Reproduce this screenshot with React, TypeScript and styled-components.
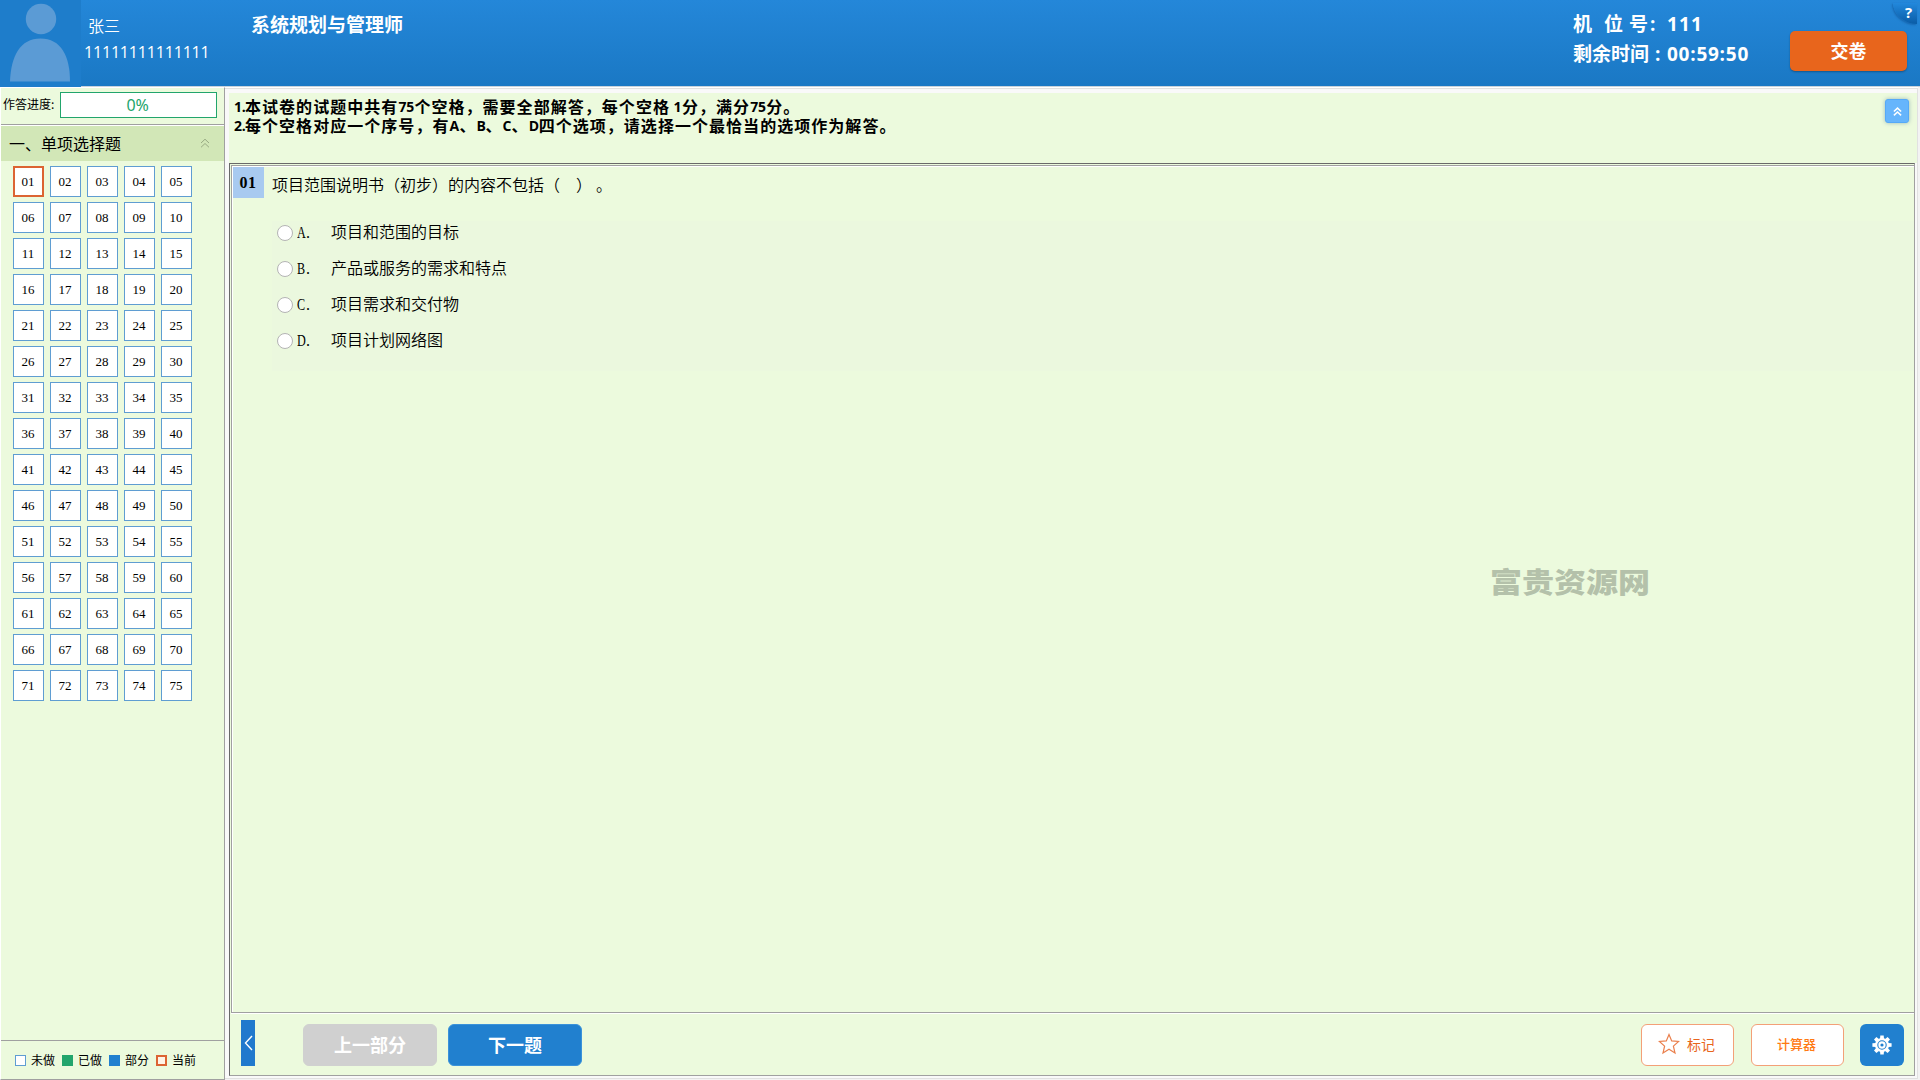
import React, { useState } from "react";
import styled, { createGlobalStyle } from "styled-components";

const GREEN = "#ecfadd";
const SANS = `"Noto Sans", "Noto Sans CJK SC", sans-serif`;
const SONG = `"Liberation Serif", "Noto Sans CJK SC", serif`;

const GlobalStyle = createGlobalStyle`
  *, *::before, *::after { box-sizing: border-box; }
  body { margin: 0; background: #f3f3f3; overflow: hidden; }
  button { border: 0; padding: 0; margin: 0; }
`;

const Page = styled.div`
  display: flex;
  flex-direction: column;
  width: 1920px;
  height: 1080px;
  font-family: ${SANS};
  color: #000;
  white-space: nowrap;
`;

const Header = styled.header`
  position: relative;
  display: flex;
  height: 87px;
  flex: none;
  border-bottom: 1px solid #c9d3dc;
  background: linear-gradient(#2487d9, #1a78c4);
  color: #fff;
`;

const Avatar = styled.div`
  width: 81px;
  height: 87px;
  background: #1e7dcb;
  svg { display: block; }
`;

const Candidate = styled.div`
  width: 170px;
  padding: 13px 0 0 3px;
`;

const CandidateName = styled.div`
  padding-left: 4px;
  font: 350 16px/24px "Noto Sans CJK SC", sans-serif;
`;

const CandidateId = styled.div`
  margin-top: 3px;
  font: 400 16px/24px "Open Sans", sans-serif;
  letter-spacing: -0.18px;
`;

const Title = styled.h1`
  margin: 0;
  flex: 1;
  font: 700 19px/28px "Noto Sans CJK SC", sans-serif;
  padding-top: 10px;
`;

const Status = styled.div`
  width: 217px;
  padding-top: 10px;
  font: 700 19px/29px "Open Sans", "Noto Sans CJK SC", sans-serif;
`;

const StatusRow = styled.div`
  display: flex;
  & + & { margin-top: 1px; }
`;

const Seg = styled.span<{ $w: number; $ls?: number }>`
  width: ${(p) => p.$w}px;
  letter-spacing: ${(p) => p.$ls ?? 0}px;
`;

const Submit = styled.button`
  width: 117px;
  height: 40px;
  margin: 31px 13px 0 0;
  padding-bottom: 2px;
  border-radius: 5px;
  background: #e8651c;
  color: #fff;
  box-shadow: 0 1px 2px rgba(0, 0, 0, 0.3);
  font: 700 18px/36px "Noto Sans CJK SC", sans-serif;
`;

const Help = styled.div`
  position: absolute;
  top: 3px;
  right: 3px;
  width: 24px;
  height: 21px;
  border-bottom-left-radius: 24px 21px;
  background: linear-gradient(#2288dc, #0a5ca6);
  box-shadow: -1px 1px 2px rgba(0, 50, 110, 0.35);
  padding-left: 7px;
  text-align: center;
  font: 700 15px/18px "Open Sans", sans-serif;
`;

const Body = styled.div`
  display: flex;
  flex: 1;
  min-height: 0;
`;

const Sidebar = styled.aside`
  display: flex;
  flex-direction: column;
  width: 225px;
  border: 1px solid #a0a0a0;
  border-left-color: #fff;
  border-top-color: #fff;
  background: ${GREEN};
`;

const Progress = styled.div`
  display: flex;
  align-items: center;
  height: 37px;
  padding: 0 7px 4px 2px;
  border-bottom: 1px solid #a0a0a0;
  font: 400 12px/18px "Noto Sans CJK SC", sans-serif;
`;

const ProgressLabel = styled.span`
  width: 57px;
`;

const ProgressBar = styled.div`
  flex: 1;
  height: 26px;
  margin-top: 2px;
  border: 1px solid #22a56c;
  background: #fff;
  color: #22a56c;
  text-align: center;
  font: 400 16px/24px "Noto Sans", sans-serif;
  letter-spacing: -0.1px;
  padding-right: 2px;
`;

const Section = styled.div`
  display: flex;
  align-items: center;
  justify-content: space-between;
  height: 36px;
  padding: 0 14px 2px 8px;
  border-top: 1px solid #fff;
  background: #d2e7b7;
  font: 400 16px/24px "Noto Sans CJK SC", sans-serif;
`;

const Grid = styled.div`
  display: grid;
  grid-template-columns: repeat(5, 31px);
  grid-auto-rows: 31px;
  gap: 5px 6px;
  padding: 5px 0 0 12px;
  flex: 1;
  align-content: start;
`;

const Cell = styled.button<{ $current: boolean }>`
  border: ${(p) => (p.$current ? "2px solid #dc6433" : "1px solid #5f9dd2")};
  background: #fff;
  color: #000;
  font: 400 13px/27px ${SONG};
  padding-right: 1px;
`;

const Legend = styled.div`
  display: flex;
  align-items: center;
  height: 39px;
  padding-left: 14px;
  border-top: 1px solid #a0a0a0;
  font: 400 12px/18px "Noto Sans CJK SC", sans-serif;
`;

const LegendItem = styled.div`
  display: flex;
  align-items: center;
  width: 47px;
  gap: 5px;
`;

const Swatch = styled.span<{ $fill: string; $border: string; $bw: number }>`
  width: 11px;
  height: 11px;
  margin-top: 1px;
  flex: none;
  background: ${(p) => p.$fill};
  border: ${(p) => p.$bw}px solid ${(p) => p.$border};
`;

const Main = styled.main`
  display: flex;
  flex-direction: column;
  width: 1693px;
  border: 1px solid #e1e1e1;
  border-left: 0;
  margin: 1px 0 1px;
  background: #f9f9f9;
  padding: 4px 0 2px 4px;
  box-shadow: 0 -2px 0 #fff;
`;

const Notice = styled.section`
  display: flex;
  justify-content: space-between;
  height: 70px;
  flex: none;
  width: 1688px;
  padding: 4px 8px 0 5px;
  background: ${GREEN};
  font: 700 16px/19px "Noto Sans CJK SC", sans-serif;
`;

const NoticeLine = styled.div`
  display: flex;
  height: 19px;
`;

const Han = styled.span`
  letter-spacing: 1.04px;
`;

const Latin = styled.span<{ $w: number }>`
  width: ${(p) => p.$w}px;
  font: 700 14px/19px "Open Sans", sans-serif;
  letter-spacing: -0.2px;
  white-space: pre;
`;

const FoldButton = styled.button`
  display: grid;
  place-items: center;
  width: 24px;
  height: 24px;
  margin-top: 2px;
  border: 1px solid #55a9f8;
  border-radius: 3px;
  background: #66b5fc;
  box-shadow: 0 0 4px rgba(0, 70, 120, 0.35);
`;

const Frame = styled.section`
  display: flex;
  flex-direction: column;
  flex: 1;
  width: 1686px;
  border: 1px solid #a0a0a0;
  border-top-color: #696969;
  border-left-color: #696969;
  background: ${GREEN};
`;

const Question = styled.div`
  position: relative;
  flex: 1;
  display: flex;
  align-items: flex-start;
  margin: 1px 0 0 1px;
  border: 1px solid #a0a0a0;
  border-right: 0;
  box-shadow: inset 1px 1px 0 #fff, 0 1px 0 #fff;
  padding: 1px 0 0 1px;
`;

const Badge = styled.div`
  width: 31px;
  height: 31px;
  padding-right: 1px;
  background: #a8caf0;
  text-align: center;
  font: 700 16px/31px ${SONG};
  letter-spacing: 0.6px;
`;

const Content = styled.div`
  flex: 1;
  padding: 6px 0 0 8px;
  font: 350 16px/26px ${SONG};
`;

const Stem = styled.p`
  margin: 0 0 22px;
`;

const Gap = styled.span<{ $w: number }>`
  display: inline-block;
  width: ${(p) => p.$w}px;
`;

const Options = styled.div`
  display: flex;
  flex-direction: column;
  background: #ebf8de;
  height: 150px;
`;

const Option = styled.label`
  display: flex;
  align-items: center;
  height: 36px;
  padding: 0 0 12px 5px;
`;

const Radio = styled.input`
  appearance: none;
  width: 16px;
  height: 16px;
  margin: 0 4px 0 0;
  border: 1px solid #b4b4b4;
  border-radius: 50%;
  background: #fff;
  &:checked { box-shadow: inset 0 0 0 4px #fff; background: #2180cf; }
`;

const Letter = styled.span`
  display: flex;
  width: 34px;
  font-weight: 400;
  font-size: 16px;
`;

const Glyph = styled.span`
  width: 9px;
  transform: scaleX(0.76);
  transform-origin: left;
`;

const Watermark = styled.div`
  position: absolute;
  left: 1258px;
  top: 397px;
  color: #b4c1aa;
  font: 900 32px/36px "Noto Sans CJK SC", sans-serif;
  transform: scaleY(0.88);
`;

const Footer = styled.footer`
  display: flex;
  align-items: flex-start;
  height: 62px;
  padding: 11px 10px 0 11px;
`;

const Tab = styled.button`
  display: grid;
  place-items: center;
  width: 14px;
  height: 46px;
  margin: -4px 48px 0 0;
  background: #2079cd;
`;

const NavButton = styled.button<{ $muted?: boolean }>`
  width: 134px;
  height: 42px;
  margin-right: 11px;
  padding-bottom: 2px;
  border: 1px solid ${(p) => (p.$muted ? "#d0d0d0" : "#3a92da")};
  border-radius: 6px;
  background: ${(p) => (p.$muted ? "#d0d0d0" : "#2180cf")};
  color: #fff;
  font: 700 18px/36px "Noto Sans CJK SC", sans-serif;
`;

const Spacer = styled.div`
  flex: 1;
`;

const ToolButton = styled.button<{ $bold?: boolean }>`
  display: flex;
  align-items: center;
  justify-content: center;
  gap: 7px;
  width: 93px;
  height: 42px;
  margin-right: ${(p) => (p.$bold ? 16 : 17)}px;
  padding: 0 2px 2px 0;
  border: 1px solid #f3a078;
  border-radius: 6px;
  background: #fff;
  color: ${(p) => (p.$bold ? "#ff7a14" : "#e8651c")};
  font: ${(p) => (p.$bold ? "500 13px" : "400 14px")}/36px "Noto Sans CJK SC", sans-serif;
`;

const SettingsButton = styled.button`
  display: grid;
  place-items: center;
  width: 44px;
  height: 42px;
  border-radius: 6px;
  background: #2180cf;
`;

const numbers = Array.from({ length: 75 }, (_, i) => String(i + 1).padStart(2, "0"));

const options = [
  ["A", "项目和范围的目标"],
  ["B", "产品或服务的需求和特点"],
  ["C", "项目需求和交付物"],
  ["D", "项目计划网络图"],
];

const legend = [
  { label: "未做", fill: "#fff", border: "#5f9dd2", bw: 1 },
  { label: "已做", fill: "#22a56c", border: "#22a56c", bw: 1 },
  { label: "部分", fill: "#2180cf", border: "#2180cf", bw: 1 },
  { label: "当前", fill: "#fff3e6", border: "#dc6433", bw: 2 },
];

function DoubleChevron({ color, size, weight }: { color: string; size: number; weight: number }) {
  return (
    <svg width={size} height={size} viewBox="0 0 10 10" fill="none" stroke={color} strokeWidth={weight}>
      <path d="M1 5 5 1.2 9 5M1 9.3 5 5.5 9 9.3" />
    </svg>
  );
}

function Gear() {
  const teeth = [0, 45, 90, 135, 180, 225, 270, 315];
  return (
    <svg width="22" height="22" viewBox="-11 -11 22 22">
      <g fill="#fff">
        {teeth.map((a) => (
          <path key={a} d="M-2-6 -1.7-9.6H1.7L2-6Z" transform={`rotate(${a})`} />
        ))}
        <circle r="7" />
      </g>
      <circle r="4.2" fill="none" stroke="#2180cf" strokeWidth="1.1" />
      <circle r="1.6" fill="#2180cf" />
    </svg>
  );
}

export default function App() {
  const [current, setCurrent] = useState("01");
  return (
    <Page>
      <GlobalStyle />
      <Header>
        <Avatar>
          <svg width="81" height="87">
            <circle cx="41" cy="19" r="15.2" fill="#5b9bd5" />
            <path d="M10 81.5C11 56 20 38.5 40.5 38.5S70 56 70 81.5Z" fill="#5b9bd5" />
          </svg>
        </Avatar>
        <Candidate>
          <CandidateName>张三</CandidateName>
          <CandidateId>11111111111111</CandidateId>
        </Candidate>
        <Title>系统规划与管理师</Title>
        <Status>
          <StatusRow>
            <Seg $w={31}>机</Seg>
            <Seg $w={25}>位</Seg>
            <Seg $w={21}>号</Seg>
            <Seg $w={17}>:</Seg>
            <Seg $w={40} $ls={1.1}>111</Seg>
          </StatusRow>
          <StatusRow>
            <Seg $w={82}>剩余时间</Seg>
            <Seg $w={12}>:</Seg>
            <Seg $w={90} $ls={0.75}>00:59:50</Seg>
          </StatusRow>
        </Status>
        <Submit>交卷</Submit>
        <Help>?</Help>
      </Header>
      <Body>
        <Sidebar>
          <Progress>
            <ProgressLabel>作答进度:</ProgressLabel>
            <ProgressBar>0%</ProgressBar>
          </Progress>
          <Section>
            一、单项选择题
            <DoubleChevron color="#98aa83" size={10} weight={1} />
          </Section>
          <Grid>
            {numbers.map((n) => (
              <Cell key={n} $current={n === current} onClick={() => setCurrent(n)}>
                {n}
              </Cell>
            ))}
          </Grid>
          <Legend>
            {legend.map((l) => (
              <LegendItem key={l.label}>
                <Swatch $fill={l.fill} $border={l.border} $bw={l.bw} />
                {l.label}
              </LegendItem>
            ))}
          </Legend>
        </Sidebar>
        <Main>
          <Notice>
            <div>
              <NoticeLine>
                <Latin $w={11}>1.</Latin>
                <Han>本试卷的试题中共有</Han>
                <Latin $w={16}>75</Latin>
                <Han>个空格，需要全部解答，每个空格</Han>
                <Latin $w={12}> 1</Latin>
                <Han>分，满分</Han>
                <Latin $w={16}>75</Latin>
                <Han>分。</Han>
              </NoticeLine>
              <NoticeLine>
                <Latin $w={11}>2.</Latin>
                <Han>每个空格对应一个序号，有</Han>
                <Latin $w={10}>A</Latin>
                <Han>、</Han>
                <Latin $w={9}>B</Latin>
                <Han>、</Han>
                <Latin $w={9}>C</Latin>
                <Han>、</Han>
                <Latin $w={10}>D</Latin>
                <Han>四个选项，请选择一个最恰当的选项作为解答。</Han>
              </NoticeLine>
            </div>
            <FoldButton>
              <DoubleChevron color="#fff" size={9} weight={1.7} />
            </FoldButton>
          </Notice>
          <Frame>
            <Question>
              <Badge>{current}</Badge>
              <Content>
                <Stem>
                  项目范围说明书（初步）的内容不包括（
                  <Gap $w={16} />） 。
                </Stem>
                <Options>
                  {options.map(([letter, text]) => (
                    <Option key={letter}>
                      <Radio type="radio" name="answer" />
                      <Letter>
                        <Glyph>{letter}</Glyph>.
                      </Letter>
                      {text}
                    </Option>
                  ))}
                </Options>
              </Content>
              <Watermark>富贵资源网</Watermark>
            </Question>
            <Footer>
              <Tab>
                <svg width="9" height="16" fill="none" stroke="#fff" strokeWidth="1.4">
                  <path d="M8 1 1.5 8 8 15" />
                </svg>
              </Tab>
              <NavButton $muted>上一部分</NavButton>
              <NavButton>下一题</NavButton>
              <Spacer />
              <ToolButton>
                <svg width="22" height="22" viewBox="0 0 22 22" fill="none" stroke="#ea7f4c" strokeWidth="1.2">
                  <path d="M11 1.5 13.7 7.9 20.6 8.5 15.4 13.1 17 20 11 16.3 5 20 6.6 13.1 1.4 8.5 8.3 7.9Z" />
                </svg>
                标记
              </ToolButton>
              <ToolButton $bold>计算器</ToolButton>
              <SettingsButton>
                <Gear />
              </SettingsButton>
            </Footer>
          </Frame>
        </Main>
      </Body>
    </Page>
  );
}
